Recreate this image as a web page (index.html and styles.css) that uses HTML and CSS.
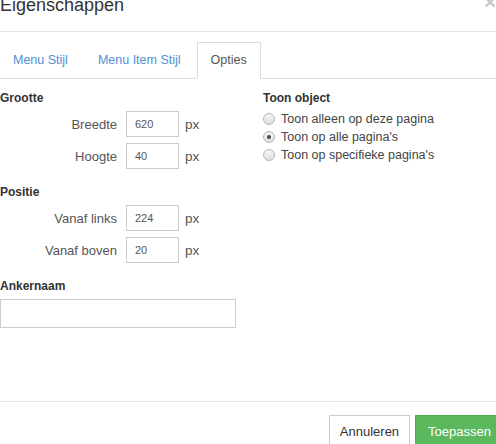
FILE: index.html
```html
<!DOCTYPE html>
<html>
<head>
<meta charset="utf-8">
<link rel="stylesheet" href="styles.css">
</head>
<body>
<div class="modal">
  <span class="close">×</span>
  <div class="header"><h4 class="title">Eigenschappen</h4></div>
  <ul class="tabs">
    <li><a class="tab">Menu Stijl</a></li>
    <li><a class="tab">Menu Item Stijl</a></li>
    <li><a class="tab active">Opties</a></li>
  </ul>
  <div class="content">
    <div class="col-left">
      <div class="heading">Grootte</div>
      <div class="rows">
        <div class="row"><span class="lbl">Breedte</span><span class="inp">620</span><span class="unit">px</span></div>
        <div class="row"><span class="lbl">Hoogte</span><span class="inp">40</span><span class="unit">px</span></div>
      </div>
      <div class="heading sec">Positie</div>
      <div class="rows">
        <div class="row"><span class="lbl">Vanaf links</span><span class="inp">224</span><span class="unit">px</span></div>
        <div class="row"><span class="lbl">Vanaf boven</span><span class="inp">20</span><span class="unit">px</span></div>
      </div>
      <div class="heading sec">Ankernaam</div>
      <div class="anker"></div>
    </div>
    <div class="col-right">
      <div class="heading">Toon object</div>
      <div class="radios">
        <div class="radio"><span class="dot"></span>Toon alleen op deze pagina</div>
        <div class="radio"><span class="dot checked"></span>Toon op alle pagina's</div>
        <div class="radio"><span class="dot"></span>Toon op specifieke pagina's</div>
      </div>
    </div>
  </div>
  <div class="footer">
    <button class="btn btn-default">Annuleren</button>
    <button class="btn btn-success">Toepassen</button>
  </div>
</div>
</body>
</html>
```
FILE: styles.css
```css
html, body {
  margin: 0;
  padding: 0;
  background: #fff;
  overflow: hidden;
}
body {
  font-family: "Liberation Sans", Arial, sans-serif;
  font-size: 12.5px;
  color: #555;
}
.modal {
  width: 496px;
  height: 444px;
  position: relative;
  display: flex;
  flex-direction: column;
  overflow: hidden;
}
.close {
  position: absolute;
  right: 0;
  top: -8px;
  font-size: 20px;
  font-weight: bold;
  color: #c8c8c8;
  line-height: 20px;
}
.header {
  margin-top: -5px;
  padding-bottom: 16px;
  border-bottom: 1px solid #e5e5e5;
}
.title {
  margin: 0;
  font-size: 18px;
  font-weight: normal;
  line-height: 20px;
  color: #333;
}
.tabs {
  list-style: none;
  margin: 10px 0 0 0;
  padding: 0;
  display: flex;
  border-bottom: 1px solid #ddd;
}
.tabs li {
  margin-bottom: -1px;
  margin-right: 2px;
}
.tab {
  display: block;
  padding: 8px 13px 9px;
  line-height: 18px;
  font-size: 12.5px;
  color: #4f8fd3;
  border: 1px solid transparent;
}
.tabs li:first-child .tab {
  margin-left: -1px;
}
.tab.active {
  color: #555;
  border-color: #ddd;
  border-bottom-color: #fff;
}
.content {
  display: flex;
  padding-top: 10px;
}
.col-left {
  width: 248px;
}
.col-right {
  padding-left: 15px;
}
.heading {
  font-weight: bold;
  font-size: 12px;
  line-height: 18px;
  color: #333;
}
.heading.sec {
  margin-top: 14px;
}
.rows {
  display: flex;
  flex-direction: column;
  gap: 6px;
  margin-top: 4px;
}
.row {
  display: flex;
  align-items: center;
}
.lbl {
  width: 117px;
  text-align: right;
  margin-right: 9px;
  font-size: 13px;
}
.inp {
  box-sizing: border-box;
  width: 53px;
  height: 26px;
  border: 1px solid #ccc;
  padding-left: 8px;
  font-size: 11px;
  line-height: 24px;
  color: #555;
}
.unit {
  margin-left: 6px;
  font-size: 13.5px;
}
.anker {
  box-sizing: border-box;
  margin-top: 4px;
  width: 236px;
  height: 29px;
  border: 1px solid #ccc;
}
.radios {
  margin-top: 3px;
}
.radio {
  display: flex;
  align-items: center;
  height: 18px;
  font-size: 12.5px;
  color: #444;
}
.dot {
  box-sizing: border-box;
  width: 12px;
  height: 12px;
  border-radius: 50%;
  border: 1px solid #b5b5b5;
  background: linear-gradient(#f6f6f6, #dedede);
  margin-right: 6px;
  display: flex;
  align-items: center;
  justify-content: center;
}
.dot.checked::after {
  content: "";
  width: 4px;
  height: 4px;
  border-radius: 50%;
  background: #444;
}
.footer {
  margin-top: auto;
  border-top: 1px solid #e5e5e5;
  padding-top: 13px;
  height: 29px;
  display: flex;
  align-items: flex-start;
  justify-content: flex-end;
  gap: 5px;
}
.btn {
  flex: none;
  font-family: "Liberation Sans", Arial, sans-serif;
  font-size: 13px;
  line-height: 20px;
  padding: 6px 10px;
  height: 34px;
  border: 1px solid #ccc;
  border-radius: 0;
  background: #fff;
  color: #333;
}
.btn-success {
  background: #5cb85c;
  border-color: #4cae4c;
  color: #fff;
  padding: 6px 12px;
  margin-right: -8px;
}
```
